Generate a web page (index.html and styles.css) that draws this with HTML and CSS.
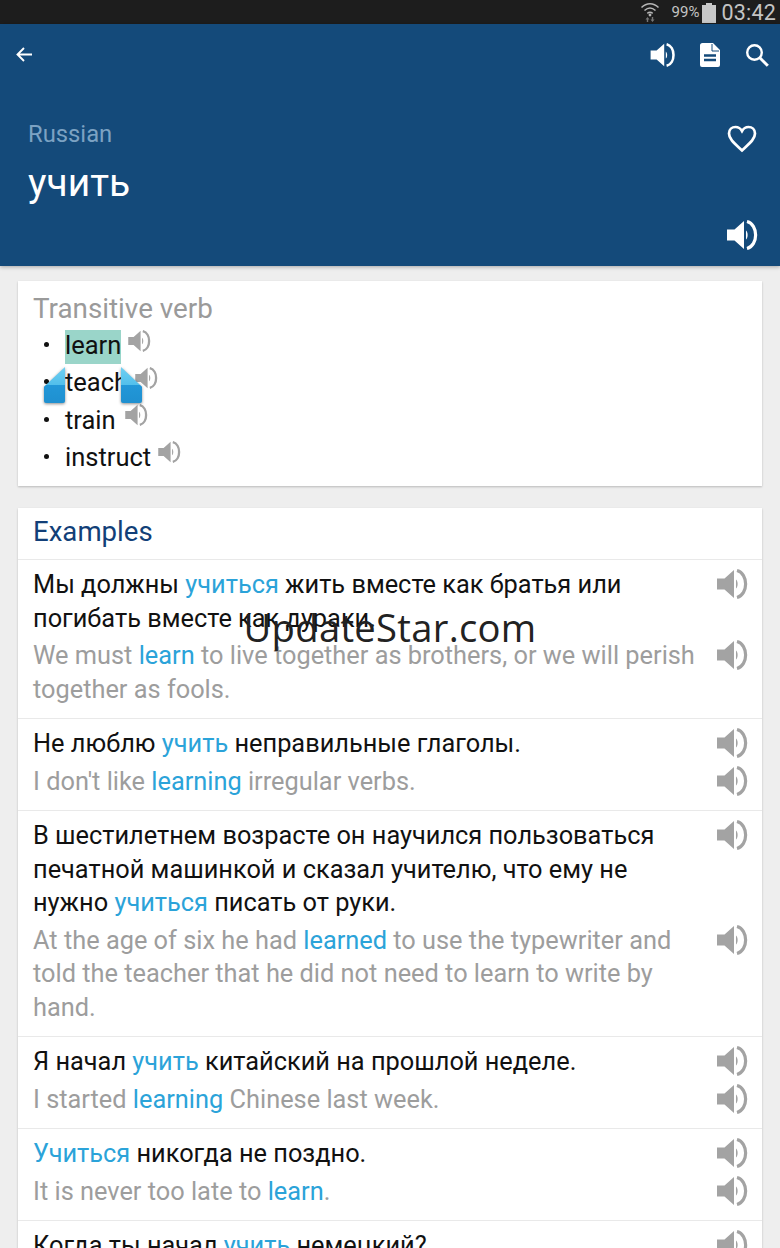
FILE: index.html
```html
<!DOCTYPE html>
<html lang="ru">
<head>
<meta charset="utf-8">
<title>учить</title>
<link rel="stylesheet" href="styles.css">
</head>
<body>
<svg class="defs" width="0" height="0" aria-hidden="true">
  <symbol id="spk" viewBox="0 0 31 30">
    <path d="M0 9.500h7.500L17 1v28l-9.500-8.500H0z" fill="currentColor"/>
    <path d="M19 10.500c2.200 1.800 2.200 7.200 0 9z" fill="currentColor"/>
    <path d="M20 1.500c11.500 3 11.500 24 0 27" fill="none" stroke="currentColor" stroke-width="3.200"/>
  </symbol>
</svg>
<div class="screen">
  <div class="status">
    <svg class="wifi" width="20" height="22" viewBox="0 0 20 22"><g fill="none" stroke="#b5b5b5" stroke-width="1.500"><path d="M1.500 6.500c5-5 12-5 17 0"/><path d="M4.500 9.500c3.500-3.200 7.500-3.200 11 0"/><path d="M7.300 12.300c1.800-1.500 3.600-1.500 5.400 0"/></g><circle cx="10" cy="14" r="1.400" fill="#b5b5b5"/><path d="M7.500 16l-2 2.500h1.300V21h1.400v-2.500h1.300zM12.500 21l2-2.500h-1.300V16h-1.400v2.500h-1.300z" fill="#777"/></svg>
    <span class="pct">99%</span>
    <span class="battery"></span>
    <span class="clock">03:42</span>
  </div>
  <header class="hero">
    <div class="toolbar">
      <svg class="back" width="18" height="18" viewBox="0 0 18 18"><path d="M9 2L2.500 8.500 9 15M2.500 8.500H17" fill="none" stroke="#fff" stroke-width="1.900"/></svg>
      <div class="actions">
        <svg class="act-spk" width="26" height="24"><use href="#spk"/></svg>
        <svg width="20" height="24" viewBox="0 0 20 24"><path d="M2.500 0H13l7 7v15a2 2 0 0 1-2 2H2a2 2 0 0 1-2-2V2.500A2.500 2.500 0 0 1 2.500 0z" fill="#fff"/><path d="M12 1v7h7" fill="none" stroke="#144a7a" stroke-width="1"/><path d="M4 12.500h12M4 17h12" stroke="#144a7a" stroke-width="2.400"/></svg>
        <svg class="act-search" width="24" height="24" viewBox="0 0 24 24"><circle cx="9.500" cy="9.500" r="7.300" fill="none" stroke="#fff" stroke-width="2.400"/><path d="M14.800 14.800l8 8" stroke="#fff" stroke-width="3"/></svg>
      </div>
    </div>
    <div class="title-row">
      <div class="titles">
        <div class="lang">Russian</div>
        <div class="word">учить</div>
      </div>
      <div class="title-icons">
        <svg width="30" height="28" viewBox="0 0 30 28"><path d="M15 25.500C7 18 2 14 2 8.500 2 4.500 5 2 8.500 2c2.700 0 5 1.400 6.500 4 1.500-2.600 3.800-4 6.500-4C25 2 28 4.500 28 8.500c0 5.500-5 9.500-13 17z" fill="none" stroke="#fff" stroke-width="2.700"/></svg>
        <svg class="big-spk" width="31" height="30"><use href="#spk"/></svg>
      </div>
    </div>
  </header>
  <main class="content">
    <section class="card defs-card">
      <h2 class="pos">Transitive verb</h2>
      <ul class="terms">
        <li><span class="sel">learn</span><svg class="mini" width="23" height="22" viewBox="0 0 31 30"><use href="#spk"/></svg></li>
        <li><span>teach</span><svg class="mini" width="23" height="22" viewBox="0 0 31 30"><use href="#spk"/></svg></li>
        <li><span>train</span><svg class="mini mini-wide" width="23" height="22" viewBox="0 0 31 30"><use href="#spk"/></svg></li>
        <li><span>instruct</span><svg class="mini" width="23" height="22" viewBox="0 0 31 30"><use href="#spk"/></svg></li>
      </ul>
      <span class="handle handle-l"></span>
      <span class="handle handle-r"></span>
    </section>
    <section class="card examples">
      <h2 class="ex-title">Examples</h2>
      <article class="ex">
        <div class="line ru"><p>Мы должны <b>учиться</b> жить вместе как братья или погибать вместе как дураки.</p><svg class="spk" width="31" height="30"><use href="#spk"/></svg></div>
        <div class="line en"><p>We must <b>learn</b> to live together as brothers, or we will perish together as fools.</p><svg class="spk" width="31" height="30"><use href="#spk"/></svg></div>
      </article>
      <article class="ex">
        <div class="line ru"><p>Не люблю <b>учить</b> неправильные глаголы.</p><svg class="spk" width="31" height="30"><use href="#spk"/></svg></div>
        <div class="line en"><p>I don't like <b>learning</b> irregular verbs.</p><svg class="spk" width="31" height="30"><use href="#spk"/></svg></div>
      </article>
      <article class="ex">
        <div class="line ru"><p>В шестилетнем возрасте он научился пользоваться печатной машинкой и сказал учителю, что ему не нужно <b>учиться</b> писать от руки.</p><svg class="spk" width="31" height="30"><use href="#spk"/></svg></div>
        <div class="line en"><p>At the age of six he had <b>learned</b> to use the typewriter and told the teacher that he did not need to learn to write by hand.</p><svg class="spk" width="31" height="30"><use href="#spk"/></svg></div>
      </article>
      <article class="ex">
        <div class="line ru"><p>Я начал <b>учить</b> китайский на прошлой неделе.</p><svg class="spk" width="31" height="30"><use href="#spk"/></svg></div>
        <div class="line en"><p>I started <b>learning</b> Chinese last week.</p><svg class="spk" width="31" height="30"><use href="#spk"/></svg></div>
      </article>
      <article class="ex">
        <div class="line ru"><p><b>Учиться</b> никогда не поздно.</p><svg class="spk" width="31" height="30"><use href="#spk"/></svg></div>
        <div class="line en"><p>It is never too late to <b>learn</b>.</p><svg class="spk" width="31" height="30"><use href="#spk"/></svg></div>
      </article>
      <article class="ex">
        <div class="line ru"><p>Когда ты начал <b>учить</b> немецкий?</p><svg class="spk" width="31" height="30"><use href="#spk"/></svg></div>
      </article>
    </section>
  </main>
  <div class="watermark">UpdateStar.com</div>
</div>
</body>
</html>
```
FILE: styles.css
```css
* { box-sizing: border-box; }
html, body { margin: 0; padding: 0; }
body { font-family: Roboto, "Liberation Sans", sans-serif; background: #eeeeee; }
.defs { position: absolute; }
.screen { position: relative; width: 780px; height: 1248px; overflow: hidden; background: #eeeeee; }
.status { height: 24px; background: #1d1d1d; color: #c4c4c4; display: flex; align-items: center; justify-content: flex-end; padding-right: 4px; }
.wifi { margin-right: 11px; position: relative; left: -1px; }
.pct { font-size: 15px; margin-right: 3px; }
.battery { width: 14px; height: 18px; background: #c8c8c8; position: relative; margin-right: 5px; top: 2px; }
.battery::before { content: ""; position: absolute; top: -2px; left: 4px; width: 6px; height: 2px; background: #c8c8c8; }
.clock { font-size: 21.500px; letter-spacing: 0.2px; }
.hero { height: 242px; background: #144a7a; box-shadow: 0 1px 4px rgba(0,0,0,.3); color: #fff; display: flex; flex-direction: column; position: relative; }
.toolbar { height: 62px; padding: 0 11px 0 15px; display: flex; align-items: center; justify-content: space-between; }
.actions { display: flex; align-items: center; gap: 24px; color: #fff; }
.act-spk { display: block; }
.act-search { margin-left: 1px; }
.title-row { display: flex; justify-content: space-between; padding: 34px 23px 0 28px; }
.lang { font-size: 23.800px; color: #7ca2c3; line-height: 28px; }
.word { font-size: 39px; line-height: 44px; margin-top: 13px; }
.title-icons { display: flex; flex-direction: column; align-items: flex-end; gap: 67px; padding-top: 5px; color: #fff; }
.big-spk { display: block; position: relative; left: 1px; }
.content { padding: 15px 18px 0; display: flex; flex-direction: column; gap: 22px; }
.card { background: #fff; box-shadow: 0 1px 2px rgba(0,0,0,.22); position: relative; }
.defs-card { height: 205px; padding: 13px 15px 0; }
.pos { margin: 0; font-size: 27.800px; line-height: 30px; font-weight: 400; color: #9a9a9a; }
.terms { list-style: none; margin: 4px 0 0; padding: 0; }
.terms li { height: 37.300px; display: flex; align-items: flex-start; font-size: 25.500px; color: #111; position: relative; padding-left: 32px; line-height: 34px; }
.terms li::before { content: ""; position: absolute; left: 11px; top: 14px; width: 5px; height: 5px; border-radius: 50%; background: #111; }
.sel { background: #9ad5c9; margin-top: 2px; height: 34px; line-height: 30px; display: block; }
.mini { color: #a3a3a3; margin: 1.500px 0 0 7px; }
.mini-wide { margin-left: 9px; }
.handle { position: absolute; top: 86px; width: 21px; height: 36px; filter: drop-shadow(0 1px 1.500px rgba(0,0,0,.45)); }
.handle::before { content: ""; position: absolute; inset: 0; border-radius: 0 0 2px 2px; background: linear-gradient(#6fd0f3 0, #52bfeb 50%, #2297d8 50%, #1f90d0 100%); }
.handle-l::before { clip-path: polygon(100% 0, 100% 100%, 0 100%, 0 55%); }
.handle-r::before { clip-path: polygon(0 0, 100% 55%, 100% 100%, 0 100%); }
.handle-l { left: 26px; }
.handle-r { left: 103px; }
.ex-title { margin: 0; height: 52px; padding: 7px 15px 0; font-size: 27.600px; line-height: 33px; font-weight: 400; color: #123f78; border-bottom: 1px solid #e9e9e9; }
.ex { padding: 8px 14px 12px 15px; border-bottom: 1px solid #e9e9e9; display: flex; flex-direction: column; gap: 4px; }
.line { display: flex; justify-content: space-between; align-items: flex-start; font-size: 25.350px; line-height: 33.500px; }
.line p { margin: 0; width: 668px; }
.line b { font-weight: 400; color: #2ba3d9; }
.ru { color: #111; }
.en { color: #9d9d9d; }
.spk { color: #a3a3a3; flex: none; margin-top: 1px; }
.watermark { position: absolute; left: 0; right: 0; top: 602px; text-align: center; font-family: "Open Sans", sans-serif; font-size: 38.200px; line-height: 50px; color: #222; letter-spacing: 0.3px; }
```
